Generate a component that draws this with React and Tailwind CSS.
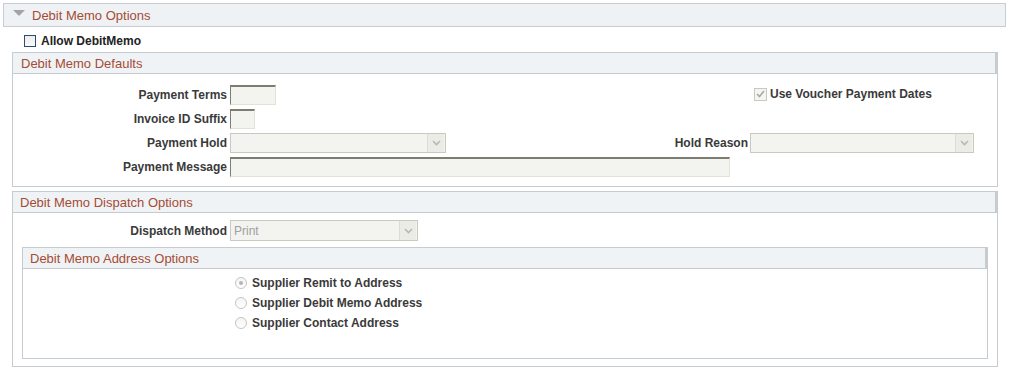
import React from "react";

const hdrText = "text-[13px] text-[#a64b34] leading-none";
const label = "text-[12px] font-bold text-[#3a3a3a] leading-none";

function TextInput({ w }) {
  return (
    <div
      className={`${w} h-[20px] bg-[#f3f3ef] border-t-2 border-l border-t-[#7d7d72] border-l-[#7d7d72] border-r border-b border-r-[#e2e2da] border-b-[#e2e2da]`}
    />
  );
}

function Select({ w, h = "h-[20px]", value }) {
  return (
    <div className={`${w} ${h} bg-[#f3f3ef] border border-[#c9c9c0] flex items-center`}>
      <span className="flex-1 pl-[3px] text-[12px] text-[#a0a0a0] leading-none">{value}</span>
      <div className="w-[17px] h-full border-l border-[#dcdcd4] bg-[#ecece7] flex items-center justify-center mr-[1px]">
        <svg width="9" height="6" viewBox="0 0 9 6">
          <path d="M1 1 L4.5 4.5 L8 1" stroke="#b8b8b0" strokeWidth="1.6" fill="none" />
        </svg>
      </div>
    </div>
  );
}

function Radio({ checked, text }) {
  return (
    <div className="h-[20px] flex items-center">
      <div className="ml-[212px] w-[12px] h-[12px] rounded-full border border-[#c4c4c0] bg-gradient-to-b from-[#f4f4f4] to-white flex items-center justify-center">
        {checked && <div className="w-[4px] h-[4px] rounded-full bg-[#b5b5b5]" />}
      </div>
      <span className={`ml-[5px] ${label}`}>{text}</span>
    </div>
  );
}

function Header({ text, pl = "pl-[8px]" }) {
  return (
    <div className={`h-[21px] bg-[#eff3f5] border-b border-r-2 border-[#c6cbd0] flex items-center ${pl}`}>
      <span className={hdrText}>{text}</span>
    </div>
  );
}

export default function App() {
  return (
    <div className="w-[1012px] h-[370px] bg-white overflow-hidden pt-[3px] pl-[3px] font-['Liberation_Sans',Arial,sans-serif]">
      {/* Top collapsible bar */}
      <div className="w-[1003px] h-[24px] border border-[#c9cdd2] bg-[#eef2f4] flex items-center">
        <svg width="12" height="7" viewBox="0 0 12 7" className="ml-[9px] -mt-[4px]">
          <path d="M0 0 L12 0 L6 6 Z" fill="#a3a3a3" />
        </svg>
        <span className={`ml-[7px] ${hdrText}`}>Debit Memo Options</span>
      </div>

      {/* Allow DebitMemo */}
      <div className="h-[25px] flex items-center pl-[21px] pt-[2px]">
        <div className="w-[12px] h-[12px] border border-[#2e4d6e] bg-gradient-to-b from-[#ececec] to-[#fafafa]" />
        <span className="ml-[5px] text-[12px] font-bold text-[#222] leading-none">Allow DebitMemo</span>
      </div>

      {/* Debit Memo Defaults */}
      <div className="ml-[9px] w-[986px] h-[135px] border border-[#c6cbd0]">
        <Header text="Debit Memo Defaults" />
        <div className="pt-[11px] flex flex-col gap-[4px]">
          {/* Row 1 */}
          <div className="h-[20px] flex items-center">
            <div className="w-[737px] flex items-center">
              <span className={`w-[214px] text-right ${label}`}>Payment Terms</span>
              <div className="ml-[3px]"><TextInput w="w-[46px]" /></div>
            </div>
            <div className="flex items-center ml-[4px] -mt-[2px]">
              <div className="w-[13px] h-[13px] border border-[#c8c8c0] bg-[#f5f5f2] flex items-center justify-center">
                <svg width="9" height="8" viewBox="0 0 9 8">
                  <path d="M1 4 L3.5 6.5 L8 1" stroke="#a8a8a8" strokeWidth="1.6" fill="none" />
                </svg>
              </div>
              <span className={`ml-[3px] ${label}`}>Use Voucher Payment Dates</span>
            </div>
          </div>
          {/* Row 2 */}
          <div className="h-[20px] flex items-center">
            <span className={`w-[214px] text-right ${label}`}>Invoice ID Suffix</span>
            <div className="ml-[3px]"><TextInput w="w-[25px]" /></div>
          </div>
          {/* Row 3 */}
          <div className="h-[20px] flex items-center">
            <span className={`w-[214px] text-right ${label}`}>Payment Hold</span>
            <div className="ml-[3px]"><Select w="w-[216px]" /></div>
            <span className={`flex-1 text-right ${label}`}>Hold Reason</span>
            <div className="ml-[2px] mr-[23px]"><Select w="w-[224px]" /></div>
          </div>
          {/* Row 4 */}
          <div className="h-[20px] flex items-center">
            <span className={`w-[214px] text-right ${label}`}>Payment Message</span>
            <div className="ml-[3px]"><TextInput w="w-[500px]" /></div>
          </div>
        </div>
      </div>

      {/* Debit Memo Dispatch Options */}
      <div className="mt-[4px] ml-[9px] w-[986px] h-[176px] border border-[#c6cbd0] flex flex-col">
        <Header text="Debit Memo Dispatch Options" pl="pl-[7px]" />
        <div className="mt-[7px] h-[21px] flex items-center">
          <span className={`w-[214px] text-right ${label}`}>Dispatch Method</span>
          <div className="ml-[3px]"><Select w="w-[188px]" h="h-[21px]" value="Print" /></div>
        </div>
        <div className="mt-[6px] ml-[9px] mr-[9px] h-[112px] border border-[#c6cbd0]">
          <Header text="Debit Memo Address Options" pl="pl-[7px]" />
          <div className="pt-[4px] flex flex-col">
            <Radio checked text="Supplier Remit to Address" />
            <Radio text="Supplier Debit Memo Address" />
            <Radio text="Supplier Contact Address" />
          </div>
        </div>
      </div>
    </div>
  );
}
